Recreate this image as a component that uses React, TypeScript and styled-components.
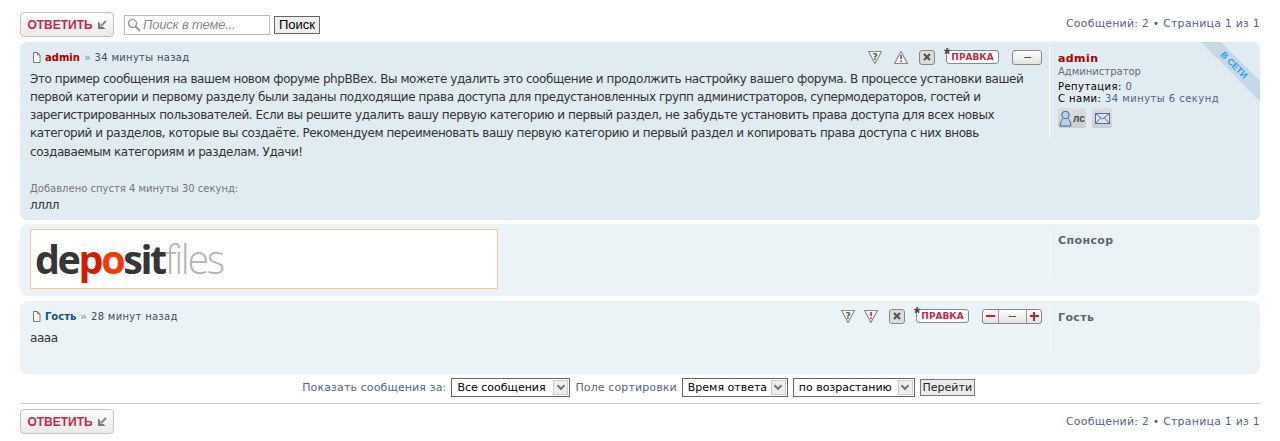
import { createGlobalStyle } from "styled-components";
import styled from "styled-components";

const GlobalStyle = createGlobalStyle`
    html, body { margin:0; padding:0; background:#fff; }
    body { font-family:"DejaVu Sans", Verdana, sans-serif; font-size:11px; color:#536482; }
    * { box-sizing:border-box; }
`

const bodyText = "Это пример сообщения на вашем новом форуме phpBBex. Вы можете удалить это сообщение и продолжить настройку вашего форума. В процессе установки вашей первой категории и первому разделу были заданы подходящие права доступа для предустановленных групп администраторов, супермодераторов, гостей и зарегистрированных пользователей. Если вы решите удалить вашу первую категорию и первый раздел, не забудьте установить права доступа для всех новых категорий и разделов, которые вы создаёте. Рекомендуем переименовать вашу первую категорию и первый раздел и копировать права доступа с них вновь создаваемым категориям и разделам. Удачи!";

function PageIcon(){
    return(
        <svg width="9" height="11" viewBox="0 0 9 11">
            <path d="M1.5.5h4l2.500 2.500v7.500h-6.500z" fill="#fff" stroke="#777"/>
            <path d="M5.500.5v2.500h2.500" fill="none" stroke="#777"/>
        </svg>
    )
}

function ReplyArrow(){
    return(
        <svg width="10" height="10" viewBox="0 0 10 10">
            <path d="M1 1.500v7.500h7.500l-2.200-2.200h-3v-3z" fill="#777"/>
            <path d="M4 6l5-5" stroke="#888" strokeWidth="1.800"/>
        </svg>
    )
}

function ReplyBar(){
    return(
        <ReplyButton>ОТВЕТИТЬ <ReplyArrow/></ReplyButton>
    )
}

function ReportIcon(){
    return(
        <svg width="16" height="15" viewBox="0 0 16 15">
            <path d="M1.500 1.500h13l-6.500 12z" fill="#f8f8f8" stroke="#8a8a8a" strokeWidth="1.100" strokeLinejoin="round"/>
            <text x="8" y="9.500" textAnchor="middle" fontSize="9" fontWeight="bold" fontFamily="DejaVu Sans" fill="#555">?</text>
        </svg>
    )
}

function WarnIcon({down}:{down?:boolean}){
    return(
        <WarnSvg $down={down} width="16" height="15" viewBox="0 0 16 15">
            <path d={down ? "M1.500 1.500h13l-6.500 12z" : "M1.500 13.500h13l-6.500-12z"} fill="#f8f8f8" stroke="#8a8a8a" strokeWidth="1.100" strokeLinejoin="round"/>
            <text x="8" y={down ? 9.500 : 12} textAnchor="middle" fontSize="9" fontWeight="bold" fontFamily="DejaVu Sans" fill={down ? "#c61a3e" : "#555"}>!</text>
        </WarnSvg>
    )
}

function DeleteIcon(){
    return(
        <DeleteBox>
            <svg width="8" height="8" viewBox="0 0 8 8">
                <path d="M1 1l6 6M7 1l-6 6" stroke="#555" strokeWidth="2.200"/>
            </svg>
        </DeleteBox>
    )
}

function PostTools({rated}:{rated?:boolean}){
    return(
        <Tools>
            <ReportIcon/>
            <WarnIcon down={rated}/>
            <DeleteIcon/>
            <EditBadge>ПРАВКА</EditBadge>
            <Rating>
                {rated && <RateCell><RateMark/></RateCell>}
                <RateCell $middle><RateDash/></RateCell>
                {rated && <RateCell><RateMark/><RatePlus/></RateCell>}
            </Rating>
        </Tools>
    )
}

export default function App(){
    return(
        <>
            <GlobalStyle/>
            <Page>
                <ActionBar>
                    <ReplyBar/>
                    <SearchForm>
                        <SearchBox>
                            <svg width="14" height="14" viewBox="0 0 14 14">
                                <circle cx="5.500" cy="5.500" r="4" fill="#eef3f6" stroke="#888" strokeWidth="1.200"/>
                                <path d="M8.500 8.500l4.500 4.500" stroke="#999" strokeWidth="2.200"/>
                            </svg>
                            <SearchHint>Поиск в теме...</SearchHint>
                        </SearchBox>
                        <SearchButton>Поиск</SearchButton>
                    </SearchForm>
                    <PageInfo $raised>Сообщений: 2 • Страница 1 из 1</PageInfo>
                </ActionBar>

                <Post $bg="#e1ebf2" $height={178}>
                    <OnlineRibbon><span>В СЕТИ</span></OnlineRibbon>
                    <PostBody>
                        <PostHead>
                            <PostMeta>
                                <PageIcon/>
                                <Author $color="#aa0000">admin</Author>
                                <Sep>»</Sep>
                                <Time>34 минуты назад</Time>
                            </PostMeta>
                            <PostTools/>
                        </PostHead>
                        <Content>{bodyText}</Content>
                        <Added>Добавлено спустя 4 минуты 30 секунд:</Added>
                        <Content>лллл</Content>
                    </PostBody>
                    <Profile $height={90}>
                        <ProfileName $color="#aa0000">admin</ProfileName>
                        <Rank>Администратор</Rank>
                        <Stat><b>Репутация:</b> 0</Stat>
                        <Stat><b>С нами:</b> 34 минуты 6 секунд</Stat>
                        <Contacts>
                            <ContactButton $width={28}>
                                <svg width="13" height="17" viewBox="0 0 13 17">
                                    <circle cx="6.500" cy="5" r="3.800" fill="#b9d0ea" stroke="#46658c"/>
                                    <path d="M3.500 9c-1.500 2-2.500 4-2.500 7h11c0-3-1-5-2.500-7" fill="#b9d0ea" stroke="#46658c"/>
                                </svg>
                                <ContactLabel>лс</ContactLabel>
                            </ContactButton>
                            <ContactButton $width={20}>
                                <svg width="15" height="11" viewBox="0 0 15 11">
                                    <rect x=".5" y=".5" width="14" height="10" fill="#d7e5f3" stroke="#4f6d92"/>
                                    <path d="M.5 .5l7 5.500 7-5.500M.5 10.500l5-5.500M14.500 10.500l-5-5.500" fill="none" stroke="#4f6d92"/>
                                </svg>
                            </ContactButton>
                        </Contacts>
                    </Profile>
                </Post>

                <Post $bg="#ecf3f7" $height={72} $mt={4}>
                    <PostBody>
                        <Banner>
                            <Logo>
                                <LogoPart $color="#363636">de</LogoPart>
                                <LogoPart $color="#d01c00">p</LogoPart>
                                <LogoPart $color="#f23a05">o</LogoPart>
                                <LogoPart $color="#363636">sit</LogoPart>
                                <LogoPart $color="#b5b5b5" $light>files</LogoPart>
                            </Logo>
                        </Banner>
                    </PostBody>
                    <Profile $height={50}>
                        <ProfileName $color="#5c6670">Спонсор</ProfileName>
                    </Profile>
                </Post>

                <Post $bg="#ecf3f7" $height={73} $mt={5}>
                    <PostBody>
                        <PostHead>
                            <PostMeta>
                                <PageIcon/>
                                <Author $color="#105289">Гость</Author>
                                <Sep>»</Sep>
                                <Time>28 минут назад</Time>
                            </PostMeta>
                            <PostTools rated/>
                        </PostHead>
                        <ShortContent>аааа</ShortContent>
                    </PostBody>
                    <Profile $height={50}>
                        <ProfileName $color="#5c6670">Гость</ProfileName>
                    </Profile>
                </Post>

                <SortBar>
                    <SortLabel>Показать сообщения за:</SortLabel>
                    <FakeSelect $width={119}>Все сообщения<SelectArrow/></FakeSelect>
                    <SortLabel>Поле сортировки</SortLabel>
                    <FakeSelect $width={106}>Время ответа<SelectArrow/></FakeSelect>
                    <FakeSelect $width={122}>по возрастанию<SelectArrow/></FakeSelect>
                    <GoButton>Перейти</GoButton>
                </SortBar>
                <Rule/>
                <ActionBar>
                    <ReplyBar/>
                    <PageInfo>Сообщений: 2 • Страница 1 из 1</PageInfo>
                </ActionBar>
            </Page>
        </>
    )
}

const Page = styled.div`
    width:1280px;
    height:441px;
    padding:12px 20px 0;
    overflow:hidden;
`
const ActionBar = styled.div`
    display:flex;
    align-items:center;
    height:25px;
`
const ReplyButton = styled.div`
    width:94px;
    height:25px;
    display:flex;
    align-items:center;
    justify-content:center;
    gap:4px;
    border:1px solid #c7c3bf;
    border-radius:4px;
    background:linear-gradient(#fff, #ece9e6);
    color:#bc2a4d;
    font:bold 12px "Liberation Sans", Arial, sans-serif;
`
const SearchForm = styled.div`
    display:flex;
    align-items:center;
    gap:4px;
    margin-left:10px;
`
const SearchBox = styled.div`
    width:146px;
    height:20px;
    display:flex;
    align-items:center;
    gap:2px;
    padding:0 2px;
    border:1px solid #b4bac0;
    background:#fff;
`
const SearchHint = styled.span`
    color:#888;
    font:italic 13px "Liberation Sans", Arial, sans-serif;
    letter-spacing:-.2px;
`
const SearchButton = styled.div`
    height:18px;
    padding:0 4px;
    display:flex;
    align-items:center;
    border:1px solid #666;
    background:#efefef;
    color:#000;
    font:13px "Liberation Sans", Arial, sans-serif;
`
const PageInfo = styled.div<{$raised?:boolean}>`
    margin-left:auto;
    padding-bottom:${p => p.$raised ? 2 : 0}px;
    font-size:11px;
    letter-spacing:.2px;
    color:#536482;
`
const Post = styled.div<{$bg:string, $height:number, $mt?:number}>`
    position:relative;
    height:${p => p.$height}px;
    margin-top:${p => p.$mt ?? 5}px;
    padding:5px 10px;
    display:flex;
    border-radius:7px;
    background:${p => p.$bg};
    overflow:hidden;
`
const OnlineRibbon = styled.div`
    position:absolute;
    top:16px;
    right:-24px;
    width:100px;
    height:14px;
    line-height:14px;
    transform:rotate(45deg);
    background:#c4d8e8;
    text-align:center;
    span{
        font:bold 9px "Liberation Sans", Arial, sans-serif;
        color:#2aa5e6;
    }
`
const PostBody = styled.div`
    width:1019px;
    padding-right:7px;
    flex-shrink:0;
`
const PostHead = styled.div`
    display:flex;
    align-items:center;
    justify-content:space-between;
    height:20px;
    margin-bottom:2.500px;
`
const PostMeta = styled.div`
    display:flex;
    align-items:center;
    padding-left:2px;
    font-size:10px;
`
const Author = styled.span<{$color:string}>`
    margin-left:4px;
    font-weight:bold;
    color:${p => p.$color};
`
const Sep = styled.span`
    margin:0 4px;
    color:#6f8fb0;
    font-size:11px;
`
const Time = styled.span`
    color:#444c5c;
    letter-spacing:.3px;
`
const Tools = styled.div`
    display:flex;
    align-items:center;
    gap:10px;
`
const WarnSvg = styled.svg<{$down?:boolean}>`
    margin-left:${p => p.$down ? -3 : 0}px;
`
const DeleteBox = styled.span`
    width:16px;
    height:15px;
    display:flex;
    align-items:center;
    justify-content:center;
    border:1px solid #888;
    border-radius:3px;
    background:#dcdcdc;
`
const EditBadge = styled.span`
    position:relative;
    width:53px;
    height:14px;
    margin-left:1px;
    display:flex;
    align-items:center;
    justify-content:center;
    border:1px solid #888;
    border-radius:3px;
    background:#fff;
    color:#bc2a4d;
    font:bold 9px "DejaVu Sans", sans-serif;
    &::before{
        content:'*';
        position:absolute;
        left:-3px;
        top:-4px;
        color:#444;
        font:bold 16px/16px "Liberation Sans", sans-serif;
    }
`
const Rating = styled.span`
    display:flex;
    height:15px;
    margin-left:3px;
    border:1px solid #888;
    border-radius:3px;
    overflow:hidden;
    background:linear-gradient(#fff, #e2e2e2);
`
const RateCell = styled.span<{$middle?:boolean}>`
    position:relative;
    width:${p => p.$middle ? 28 : 15}px;
    display:flex;
    align-items:center;
    justify-content:center;
    & + &{
        border-left:1px solid #999;
    }
`
const RateDash = styled.i`
    width:7px;
    height:1px;
    background:#555;
`
const RateMark = styled.i`
    width:9px;
    height:2px;
    background:#c61a3e;
`
const RatePlus = styled.i`
    position:absolute;
    left:6px;
    top:2px;
    width:2px;
    height:9px;
    background:#c61a3e;
`
const Content = styled.div`
    font-size:12px;
    letter-spacing:-.43px;
    line-height:18.250px;
    color:#333;
`
const ShortContent = styled(Content)`
    margin-top:3px;
`
const Added = styled.div`
    margin-top:20.500px;
    font-size:10px;
    line-height:15px;
    color:#777;
`
const Profile = styled.div<{$height:number}>`
    width:201px;
    height:${p => p.$height}px;
    padding-left:8px;
    border-left:1px solid #fff;
    font-size:10px;
    line-height:12px;
    color:#536482;
`
const ProfileName = styled.div<{$color:string}>`
    margin-top:5px;
    font-size:11px;
    line-height:14px;
    font-weight:bold;
    letter-spacing:.4px;
    color:${p => p.$color};
`
const Rank = styled.div`
    margin-bottom:3px;
    color:#666e7a;
`
const Stat = styled.div`
    letter-spacing:.45px;
    b{
        font-weight:normal;
        color:#000;
    }
`
const Contacts = styled.div`
    display:flex;
    gap:6px;
    margin-top:3px;
`
const ContactButton = styled.div<{$width:number}>`
    width:${p => p.$width}px;
    height:20px;
    display:flex;
    align-items:center;
    justify-content:center;
    gap:1px;
    border-radius:2px;
    background:linear-gradient(#dedede, #cdcdcd);
`
const ContactLabel = styled.span`
    font:bold 10px "Liberation Sans", sans-serif;
    color:#3b4a5c;
`
const Banner = styled.div`
    width:468px;
    height:60px;
    border:1px solid #ffc69e;
    background:#fff;
    display:flex;
    align-items:center;
    padding-left:4px;
`
const Logo = styled.div`
    display:flex;
    font-family:"Open Sans", sans-serif;
    font-size:39.500px;
    letter-spacing:-2.400px;
    line-height:50px;
`
const LogoPart = styled.span<{$color:string, $light?:boolean}>`
    color:${p => p.$color};
    font-weight:${p => p.$light ? 300 : 700};
`
const SortBar = styled.div`
    height:24px;
    display:flex;
    align-items:center;
    justify-content:center;
    gap:5px;
    padding:2px 3px 0 0;
    color:#536482;
    font-size:11px;
    font-family:Tahoma, "DejaVu Sans", sans-serif;
`
const SortLabel = styled.span`
    letter-spacing:.12px;
`
const FakeSelect = styled.div<{$width:number}>`
    width:${p => p.$width}px;
    height:19px;
    display:flex;
    align-items:center;
    justify-content:space-between;
    padding:0 1px 0 5px;
    border:1px solid #666;
    background:#fff;
    color:#000;
    font-size:11px;
`
const SelectArrow = styled.span`
    width:15px;
    height:15px;
    display:flex;
    align-items:center;
    justify-content:center;
    border:1px solid #ccc;
    background:#eee;
    &::after{
        content:'';
        width:4px;
        height:4px;
        margin-top:-2px;
        border-right:2px solid #777;
        border-bottom:2px solid #777;
        transform:rotate(45deg);
    }
`
const GoButton = styled.div`
    width:55px;
    height:17px;
    display:flex;
    align-items:center;
    justify-content:center;
    border:1px solid #777;
    background:#ebebeb;
    color:#222;
    font-size:11px;
`
const Rule = styled.div`
    height:1px;
    margin:5px 0;
    background:#ccc;
`
